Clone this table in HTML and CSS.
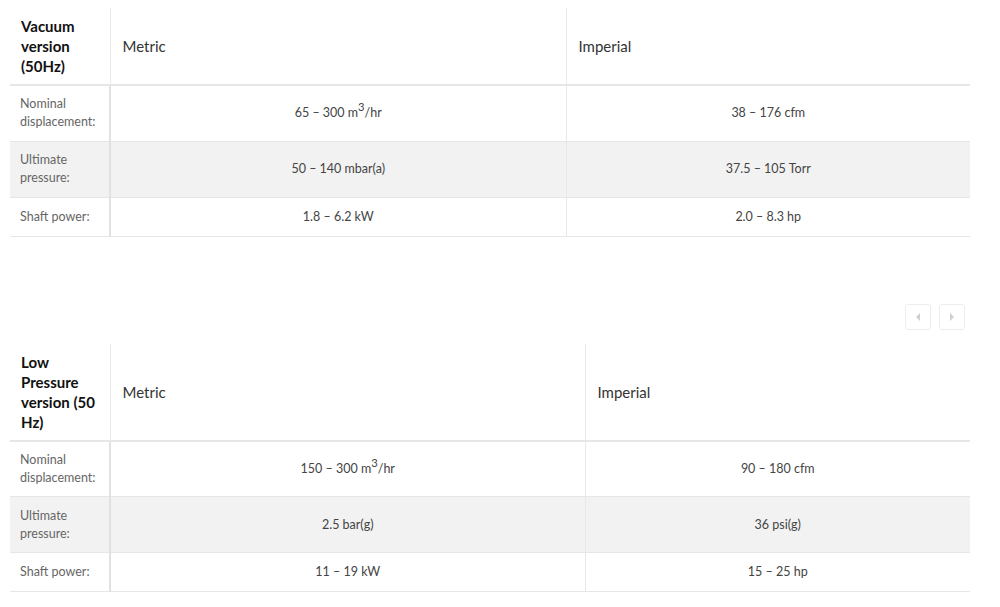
FILE: index.html
```html
<!DOCTYPE html>
<html lang="en">
<head>
<meta charset="utf-8">
<title>Specifications</title>
<link rel="stylesheet" href="styles.css">
</head>
<body>
<div class="page">
  <table class="spec spec-a">
    <colgroup>
      <col class="c-label">
      <col class="c-metric-a">
      <col>
    </colgroup>
    <thead>
      <tr>
        <th class="h-title">Vacuum version (50Hz)</th>
        <th class="h-unit">Metric</th>
        <th class="h-unit">Imperial</th>
      </tr>
    </thead>
    <tbody>
      <tr>
        <td class="lbl">Nominal displacement:</td>
        <td class="val">65 – 300 m<sup>3</sup>/hr</td>
        <td class="val">38 – 176 cfm</td>
      </tr>
      <tr class="alt">
        <td class="lbl">Ultimate pressure:</td>
        <td class="val">50 – 140 mbar(a)</td>
        <td class="val">37.5 – 105 Torr</td>
      </tr>
      <tr>
        <td class="lbl">Shaft power:</td>
        <td class="val">1.8 – 6.2 kW</td>
        <td class="val">2.0 – 8.3 hp</td>
      </tr>
    </tbody>
  </table>

  <div class="nav">
    <button class="nav-btn" aria-label="Previous"><span class="tri tri-left"></span></button>
    <button class="nav-btn" aria-label="Next"><span class="tri tri-right"></span></button>
  </div>

  <table class="spec spec-b">
    <colgroup>
      <col class="c-label">
      <col class="c-metric-b">
      <col>
    </colgroup>
    <thead>
      <tr>
        <th class="h-title">Low Pressure version (50 Hz)</th>
        <th class="h-unit">Metric</th>
        <th class="h-unit">Imperial</th>
      </tr>
    </thead>
    <tbody>
      <tr>
        <td class="lbl">Nominal displacement:</td>
        <td class="val">150 – 300 m<sup>3</sup>/hr</td>
        <td class="val">90 – 180 cfm</td>
      </tr>
      <tr class="alt">
        <td class="lbl">Ultimate pressure:</td>
        <td class="val">2.5 bar(g)</td>
        <td class="val">36 psi(g)</td>
      </tr>
      <tr>
        <td class="lbl">Shaft power:</td>
        <td class="val">11 – 19 kW</td>
        <td class="val">15 – 25 hp</td>
      </tr>
    </tbody>
  </table>
</div>
</body>
</html>
```
FILE: styles.css
```css
* { box-sizing: border-box; }
html, body { margin: 0; padding: 0; background: #fff; }
body {
  font-family: Lato, "Liberation Sans", sans-serif;
  color: #444;
}
.page {
  width: 1000px;
  padding: 8px 30px 0 10px;
}
.spec {
  width: 960px;
  border-collapse: collapse;
  table-layout: fixed;
}
.c-label { width: 100px; }
.c-metric-a { width: 456px; }
.c-metric-b { width: 475px; }

.spec th {
  text-align: left;
  vertical-align: middle;
  font-weight: normal;
  border-left: 1px solid #ebebeb;
  border-bottom: 2px solid #e6e6e6;
}
.spec th:first-child { border-left: none; }
.h-title {
  padding: 8px 6px 8px 11px;
  font-size: 15px;
  line-height: 20px;
  font-weight: 700 !important;
  color: #111;
}
.h-unit {
  padding: 0 12px;
  font-size: 15px;
  line-height: 20px;
  color: #333;
}
.spec-a thead tr { height: 76px; }
.spec-b thead tr { height: 96px; }

.spec td {
  border-bottom: 1px solid #e6e6e6;
  border-left: 1px solid #e8e8e8;
  padding: 9px 10px;
  font-size: 12.5px;
  line-height: 18px;
  vertical-align: middle;
}
.spec td.lbl {
  border-left: none;
  border-right: 2px solid #e2e0e0;
  color: #666;
  padding-left: 10px;
}
.spec td.val { text-align: center; color: #444; }
.spec tr.alt td { background: #f2f2f2; }
.spec tbody tr { height: 56px; }
.spec tbody tr:last-child { height: 39px; }
.spec sup { font-size: 0.9em; line-height: 0; vertical-align: 0.5em; }

.nav {
  display: flex;
  justify-content: flex-end;
  gap: 8px;
  margin: 67px 5px 14px 0;
}
.nav-btn {
  width: 26px;
  height: 26px;
  padding: 0;
  border: 1px solid #ededed;
  border-radius: 3px;
  background: #fff;
  display: flex;
  align-items: center;
  justify-content: center;
}
.tri {
  width: 0;
  height: 0;
  border-top: 4px solid transparent;
  border-bottom: 4px solid transparent;
}
.tri-left { border-right: 4px solid #cfcfcf; }
.tri-right { border-left: 4px solid #cfcfcf; }
```
